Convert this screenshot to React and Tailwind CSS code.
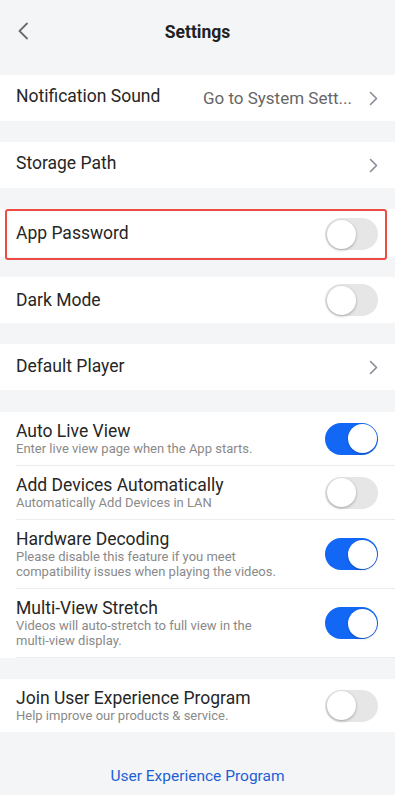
import React from "react";

const Chevron = () => (
  <svg width="9" height="15" viewBox="0 0 9 15" fill="none" className="shrink-0">
    <path d="M1.5 1.5 L7.5 7.5 L1.5 13.5" stroke="#8b8b98" strokeWidth="1.6" strokeLinecap="round" strokeLinejoin="round" />
  </svg>
);

const Toggle = ({ on }) =>
  on ? (
    <div className="relative w-[53px] h-[32px] rounded-full bg-[#1267f4] shrink-0">
      <div className="absolute right-[1.5px] top-[1.5px] w-[29px] h-[29px] rounded-full bg-white shadow-[0_1px_2px_rgba(0,0,0,0.25)]" />
    </div>
  ) : (
    <div className="relative w-[53px] h-[32px] rounded-full bg-[#e6e6e6] shrink-0">
      <div className="absolute left-[1.5px] top-[1.5px] w-[29px] h-[29px] rounded-full bg-white shadow-[0_1px_3px_rgba(0,0,0,0.3)]" />
    </div>
  );

const SimpleRow = ({ title, right, titleClass = "" }) => (
  <div className="relative bg-white h-[46px] flex items-center pl-4 pr-[17px]">
    <span className={"flex-1 text-[17.5px] text-[#262626] " + titleClass}>{title}</span>
    {right}
  </div>
);

const DescRow = ({ title, desc, on, last }) => (
  <div className="bg-white pl-4">
    <div className={"flex items-center pr-[17px] pt-[9px] pb-[9px] " + (last ? "" : "border-b border-[#ececec]")}>
      <div className="flex-1 min-w-0">
        <div className="text-[17.5px] leading-[20px] text-[#262626]">{title}</div>
        <div className="text-[13px] leading-[15px] text-[#8a8a8a] max-w-[268px]">{desc}</div>
      </div>
      <Toggle on={on} />
    </div>
  </div>
);

export default function App() {
  return (
    <div className="w-[395px] h-[795px] bg-[#f4f5f7] overflow-hidden" style={{ fontFamily: "Roboto, 'Noto Sans', sans-serif" }}>
      <div className="relative h-[75px] flex items-start justify-center pt-[19px]">
        <svg className="absolute left-[17px] top-[22px]" width="12" height="18" viewBox="0 0 12 18" fill="none">
          <path d="M10 1.5 L2.5 9 L10 16.5" stroke="#6b6b6b" strokeWidth="1.8" strokeLinecap="round" strokeLinejoin="round" />
        </svg>
        <span className="text-[17.5px] font-bold text-[#222]">Settings</span>
      </div>

      <SimpleRow
        title="Notification Sound"
        titleClass="pb-[3px]"
        right={
          <div className="flex items-center gap-[17px]">
            <span className="text-[17px] text-[#666] pt-[2px]">Go to System Sett...</span>
            <Chevron />
          </div>
        }
      />
      <div className="h-[21px]" />
      <SimpleRow title="Storage Path" titleClass="pb-[3px]" right={<Chevron />} />
      <div className="h-[21px]" />
      <div className="relative bg-white h-[48px] flex items-center pl-4 pr-[17px]">
        <span className="flex-1 text-[17.5px] text-[#262626]">App Password</span>
        <div className="pt-[2px]"><Toggle on={false} /></div>
        <div className="absolute left-[5px] right-[8px] top-0 h-[51px] border-[2.5px] border-[#ee4b43] rounded-[3px] pointer-events-none" />
      </div>
      <div className="h-[20px]" />
      <SimpleRow title="Dark Mode" right={<Toggle on={false} />} />
      <div className="h-[21px]" />
      <SimpleRow title="Default Player" titleClass="pb-[1px]" right={<Chevron />} />
      <div className="h-[22px]" />

      <DescRow title="Auto Live View" desc="Enter live view page when the App starts." on />
      <DescRow title="Add Devices Automatically" desc="Automatically Add Devices in LAN" on={false} />
      <DescRow title="Hardware Decoding" desc="Please disable this feature if you meet compatibility issues when playing the videos." on />
      <DescRow title="Multi-View Stretch" desc="Videos will auto-stretch to full view in the multi-view display." on />
      <div className="h-[21px]" />
      <DescRow title="Join User Experience Program" desc="Help improve our products & service." on={false} last />

      <div className="flex justify-center pt-[33px]">
        <span className="text-[15.5px] text-[#1f5fd6]">User Experience Program</span>
      </div>
    </div>
  );
}
